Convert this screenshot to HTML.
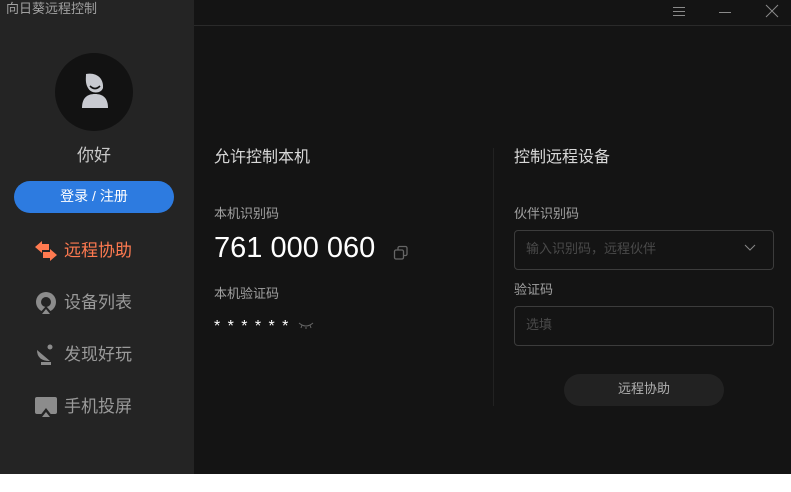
<!DOCTYPE html>
<html><head><meta charset="utf-8"><style>
*{margin:0;padding:0;box-sizing:border-box}
body{width:791px;height:492px;background:#fff;position:relative;overflow:hidden;font-family:"Liberation Sans","Noto Sans CJK SC",sans-serif}
.side{position:absolute;left:0;top:0;width:194px;height:474px;background:#242424}
.main{position:absolute;left:194px;top:0;width:597px;height:474px;background:#141414}
.t{position:absolute;white-space:nowrap;line-height:1.15}
.line{position:absolute;background:#2a2a2a}
.nav{position:absolute;left:64px;font-size:17px;color:#9a9a9a;line-height:1.15}
.box{position:absolute;left:514px;width:260px;height:40px;border:1px solid #3c3c3c;border-radius:4px}
</style></head><body>
<div class="side">
<div class="t" style="left:6px;top:2px;font-size:13px;color:#a0a0a0">向日葵远程控制</div>
<div style="position:absolute;left:55px;top:53px;width:78px;height:78px;border-radius:50%;background:#121212"></div>
<svg style="position:absolute;left:78px;top:72px" width="34" height="38" viewBox="0 0 34 38"><path d="M4 36 C4 26 9 22 17 22 C25 22 30 26 30 36 Z" fill="#c8cad0"/><path d="M8 2 C18 0 26 6 25 16 C23 22 13 22 10 16 C7 11 8 6 8 2Z" fill="#c8cad0"/><path d="M12 14 Q17 19 22 14" stroke="#121212" stroke-width="1.6" fill="none"/></svg>
<div class="t" style="left:77px;top:146px;font-size:17px;color:#c8c8c8">你好</div>
<div style="position:absolute;left:14px;top:181px;width:160px;height:32px;border-radius:16px;background:#2d7be0;color:#fff;font-size:14px;text-align:center;line-height:30px">登录 / 注册</div>
<svg style="position:absolute;left:34px;top:240px" width="24" height="22" viewBox="0 0 24 22"><path d="M1 7 L8 1 L8 4 L15 4 L15 10 L8 10 L8 13 Z" fill="#ff7a50"/><path d="M23 15 L16 21 L16 18 L9 18 L9 12 L16 12 L16 9 Z" fill="#ff7a50"/></svg>
<div class="nav" style="top:241px;color:#ff7a50">远程协助</div>
<svg style="position:absolute;left:35px;top:292px" width="22" height="22" viewBox="0 0 22 22"><circle cx="11" cy="10" r="10" fill="#8c8c8c"/><circle cx="11" cy="10" r="5" fill="#242424"/><path d="M4 22 L11 14 L18 22Z" fill="#242424"/><path d="M7 22 L11 17 L15 22Z" fill="#8c8c8c"/></svg>
<div class="nav" style="top:293px">设备列表</div>
<svg style="position:absolute;left:36px;top:344px" width="20" height="22" viewBox="0 0 20 22"><path d="M1 6 Q1 17 14 17 Z" fill="#8c8c8c"/><circle cx="14" cy="3" r="2.5" fill="#8c8c8c"/><rect x="5" y="18" width="10" height="3" fill="#8c8c8c"/></svg>
<div class="nav" style="top:345px">发现好玩</div>
<svg style="position:absolute;left:35px;top:397px" width="22" height="20" viewBox="0 0 22 20"><rect x="0" y="0" width="22" height="17" rx="2" fill="#8c8c8c"/><path d="M4 20 L11 11 L18 20Z" fill="#242424"/><path d="M7 20 L11 15 L15 20Z" fill="#8c8c8c"/></svg>
<div class="nav" style="top:397px">手机投屏</div>
</div>
<div class="main"></div>
<div class="line" style="left:194px;top:25px;width:597px;height:1px"></div>
<div class="line" style="left:493px;top:148px;width:1px;height:258px;background:#222"></div>
<svg style="position:absolute;left:672px;top:3px" width="110" height="16"><g stroke="#8a8a8a" stroke-width="1"><path d="M1 4.5H13M1 8.5H13M1 12.5H13"/><path d="M47 9.5H59"/><path d="M94 2L106 14M106 2L94 14"/></g></svg>
<div class="t" style="left:214px;top:149px;font-size:16px;color:#d8d8d8">允许控制本机</div>
<div class="t" style="left:214px;top:207px;font-size:13px;color:#a0a0a0">本机识别码</div>
<div class="t" style="left:214px;top:232px;font-size:29px;color:#fff">761 000 060</div>
<svg style="position:absolute;left:393px;top:245px" width="16" height="16"><rect x="5" y="1.5" width="9" height="9" rx="1.5" fill="none" stroke="#666" stroke-width="1.3"/><rect x="1.5" y="5" width="9" height="9" rx="1.5" fill="#141414" stroke="#666" stroke-width="1.3"/></svg>
<div class="t" style="left:214px;top:287px;font-size:13px;color:#a0a0a0">本机验证码</div>
<div class="t" style="left:214px;top:318px;font-size:16px;color:#fff;letter-spacing:7.4px">******</div>
<svg style="position:absolute;left:298px;top:322px" width="16" height="8"><path d="M1 1 Q8 7 15 1M4 3L3 6M8 5V7M12 3L13 6" stroke="#666" fill="none"/></svg>
<div class="t" style="left:514px;top:149px;font-size:16px;color:#d8d8d8">控制远程设备</div>
<div class="t" style="left:514px;top:207px;font-size:13px;color:#a0a0a0">伙伴识别码</div>
<div class="box" style="top:230px"></div>
<div class="t" style="left:526px;top:242px;font-size:13px;color:#4a4a4a">输入识别码，远程伙伴</div>
<svg style="position:absolute;left:744px;top:244px" width="12" height="8"><path d="M1 1L6 6L11 1" stroke="#888" fill="none"/></svg>
<div class="t" style="left:514px;top:283px;font-size:13px;color:#a0a0a0">验证码</div>
<div class="box" style="top:306px"></div>
<div class="t" style="left:526px;top:318px;font-size:13px;color:#4a4a4a">选填</div>
<div style="position:absolute;left:564px;top:374px;width:160px;height:32px;border-radius:16px;background:#222;color:#b0b0b0;font-size:13px;text-align:center;line-height:30px">远程协助</div>
</body></html>
